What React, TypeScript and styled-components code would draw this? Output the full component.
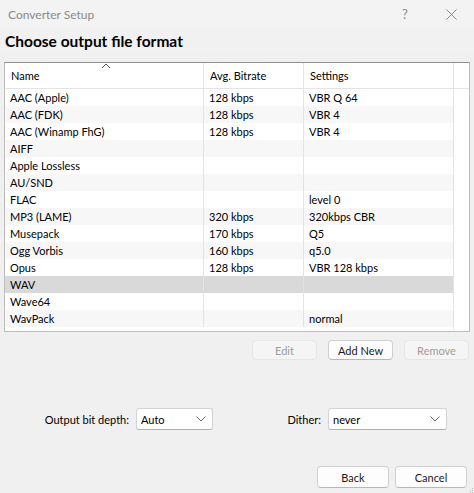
import styled, { createGlobalStyle } from 'styled-components';

const GlobalStyle = createGlobalStyle`
    html, body {
        margin: 0;
        padding: 0;
        background: #f0f0f0;
    }
    body {
        font-family: Lato, "Noto Sans", sans-serif;
        font-size: 11px;
        color: #000;
    }
`

const Window = styled.div`
    position: relative;
    width: 474px;
    height: 493px;
    background: #f0f0f0;
    display: flex;
    flex-direction: column;
    overflow: hidden;
`
const TitleBar = styled.div`
    height: 28px;
    display: flex;
    align-items: center;
    padding-left: 8px;
    background: #f3f3f3;
    color: #8a8a8a;
    font-size: 12px;
`
const TitleText = styled.span`
    flex: 1;
`
const TitleIcon = styled.span`
    width: 46px;
    display: flex;
    justify-content: center;
    align-items: center;
    color: #8a8a8a;
    font-size: 13px;
`
const Heading = styled.h1`
    margin: 0;
    height: 26px;
    padding-left: 5px;
    display: flex;
    align-items: center;
    font-size: 15.5px;
    font-weight: 700;
    background: #f1f1f1;
`
const Table = styled.div`
    margin: 8px 4px 0 4px;
    height: 270px;
    box-sizing: border-box;
    background: #fff;
    border: 1px solid #bdbdbd;
    border-top-color: #8f8f8f;
    display: flex;
    flex-direction: column;
`
const Row = styled.div<{ $height?: number }>`
    display: grid;
    grid-template-columns: 199px 100px 150px 1fr;
    height: ${p => p.$height ?? 17}px;
    flex-shrink: 0;
`
const HeaderRow = styled(Row)`
    border-bottom: 1px solid #e3e3e3;
`
const Cell = styled.div<{ $bg?: string; $last?: boolean }>`
    position: relative;
    display: flex;
    align-items: center;
    padding-left: 5px;
    background: ${p => p.$bg ?? 'transparent'};
    border-right: ${p => (p.$last ? 'none' : '1px solid #e3e3e3')};
    white-space: nowrap;
    overflow: hidden;
`
const HeaderCell = styled(Cell)`
    padding-left: 6px;
`
const SortArrow = styled.svg`
    position: absolute;
    left: 96px;
    top: 0;
`
const Filler = styled.div`
    flex: 1;
    display: grid;
    grid-template-columns: 449px 1fr;
`
const FillerCell = styled.div<{ $divider?: boolean }>`
    border-right: ${p => (p.$divider ? '1px solid #ececec' : 'none')};
`
const ActionRow = styled.div`
    margin-top: 8px;
    display: flex;
    justify-content: flex-end;
    gap: 11px;
    padding-right: 5px;
`
const Button = styled.button<{ $width?: number }>`
    width: ${p => p.$width ?? 65}px;
    height: 20px;
    box-sizing: border-box;
    font-family: inherit;
    font-size: 11px;
    padding: 0;
    border-radius: 4px;
    background: #fdfdfd;
    border: 1px solid #d0d0d0;
    border-bottom-color: #b8b8b8;
    color: #1a1a1a;
    &:disabled {
        background: #f5f5f5;
        border-color: #e5e5e5;
        color: #9d9d9d;
    }
`
const OptionsRow = styled.div`
    margin-top: 48px;
    display: grid;
    grid-template-columns: 129px 77px 101px 119px;
    column-gap: 7px;
    align-items: center;
`
const Label = styled.label`
    text-align: right;
`
const Combo = styled.div`
    height: 22px;
    box-sizing: border-box;
    background: #fff;
    border: 1px solid #d3d3d3;
    border-bottom-color: #b0b0b0;
    border-radius: 3px;
    display: flex;
    align-items: center;
    justify-content: space-between;
    padding: 0 6px 0 4px;
`
const FooterRow = styled.div`
    margin-top: 36px;
    display: flex;
    justify-content: flex-end;
    gap: 6px;
    padding-right: 7px;
`
const FooterButton = styled(Button)`
    height: 22px;
`
const Grip = styled.svg`
    position: absolute;
    right: 0;
    bottom: 0;
`

type Format = { name: string; bitrate: string; settings: string };

const formats: Format[] = [
    { name: 'AAC (Apple)', bitrate: '128 kbps', settings: 'VBR Q 64' },
    { name: 'AAC (FDK)', bitrate: '128 kbps', settings: 'VBR 4' },
    { name: 'AAC (Winamp FhG)', bitrate: '128 kbps', settings: 'VBR 4' },
    { name: 'AIFF', bitrate: '', settings: '' },
    { name: 'Apple Lossless', bitrate: '', settings: '' },
    { name: 'AU/SND', bitrate: '', settings: '' },
    { name: 'FLAC', bitrate: '', settings: 'level 0' },
    { name: 'MP3 (LAME)', bitrate: '320 kbps', settings: '320kbps CBR' },
    { name: 'Musepack', bitrate: '170 kbps', settings: 'Q5' },
    { name: 'Ogg Vorbis', bitrate: '160 kbps', settings: 'q5.0' },
    { name: 'Opus', bitrate: '128 kbps', settings: 'VBR 128 kbps' },
    { name: 'WAV', bitrate: '', settings: '' },
    { name: 'Wave64', bitrate: '', settings: '' },
    { name: 'WavPack', bitrate: '', settings: 'normal' },
]

const selected = 'WAV'

function Chevron() {
    return (
        <svg width="10" height="6" viewBox="0 0 10 6">
            <polyline points="0.5,0.5 5,5 9.5,0.5" fill="none" stroke="#666" strokeWidth="1" />
        </svg>
    )
}

export default function App() {
    return (
    <Window>
        <GlobalStyle />
        <TitleBar>
            <TitleText>Converter Setup</TitleText>
            <TitleIcon>?</TitleIcon>
            <TitleIcon>
                <svg width="11" height="11" viewBox="0 0 11 11">
                    <path d="M0.5 0.5 L10.5 10.5 M10.5 0.5 L0.5 10.5" stroke="#8a8a8a" strokeWidth="1" />
                </svg>
            </TitleIcon>
        </TitleBar>
        <Heading>Choose output file format</Heading>
        <Table>
            <HeaderRow $height={25}>
                <HeaderCell>
                    <SortArrow width="10" height="6" viewBox="0 0 10 6">
                        <polyline points="1,5 5,1 9,5" fill="none" stroke="#555" strokeWidth="1" />
                    </SortArrow>
                    Name
                </HeaderCell>
                <HeaderCell>Avg. Bitrate</HeaderCell>
                <HeaderCell>Settings</HeaderCell>
                <HeaderCell $last />
            </HeaderRow>
            {formats.map((f, i) => {
                const bg = f.name === selected ? '#d9d9d9' : i % 2 === 1 ? '#f7f7f7' : '#fff'
                return (
                    <Row key={f.name}>
                        <Cell $bg={bg}>{f.name}</Cell>
                        <Cell $bg={bg}>{f.bitrate}</Cell>
                        <Cell $bg={bg}>{f.settings}</Cell>
                        <Cell $last />
                    </Row>
                )
            })}
            <Filler>
                <FillerCell $divider />
                <FillerCell />
            </Filler>
        </Table>
        <ActionRow>
            <Button disabled>Edit</Button>
            <Button>Add New</Button>
            <Button disabled>Remove</Button>
        </ActionRow>
        <OptionsRow>
            <Label>Output bit depth:</Label>
            <Combo>Auto <Chevron /></Combo>
            <Label>Dither:</Label>
            <Combo>never <Chevron /></Combo>
        </OptionsRow>
        <FooterRow>
            <FooterButton $width={72}>Back</FooterButton>
            <FooterButton $width={72}>Cancel</FooterButton>
        </FooterRow>
        <Grip width="5" height="5" viewBox="0 0 5 5">
            <rect x="3" y="0" width="1" height="1" fill="#b5b5b5" />
            <rect x="1" y="2" width="1" height="1" fill="#b5b5b5" />
            <rect x="3" y="2" width="1" height="1" fill="#b5b5b5" />
            <rect x="3" y="4" width="1" height="1" fill="#b5b5b5" />
            <rect x="1" y="4" width="1" height="1" fill="#b5b5b5" />
        </Grip>
    </Window>
    );
}
